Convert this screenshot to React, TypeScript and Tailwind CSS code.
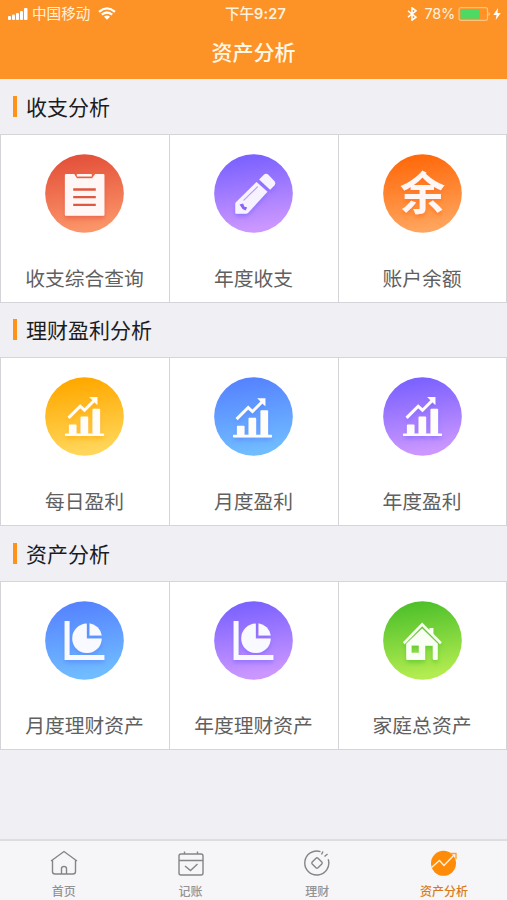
import type { ReactNode } from 'react';

type Tile = { label: string; from: string; to: string; icon: ReactNode };
type Section = { title: string; tiles: Tile[] };

const ink = '#fff7f5';

const Clipboard = () => (
  <g fill={ink}>
    <path d="M63 60H88L96 73H142L151 60H176Q179 60 179 63V183Q179 186 176 186H63Q60 186 60 183V63Q60 60 63 60Z" />
    <rect x="96" y="60" width="45" height="8" rx="2" />
    <path d="M85 107H153M85 130H153M85 153.500H153" stroke="#e0583f" strokeWidth="7" />
  </g>
);

const Pencil = () => (
  <g fill="#f7f2ff">
    <path d="M128 84L161 114L103 177Q100 180 96 180H67Q64 180 64 177V150Q64 147 66 145Z" />
    <path d="M151 62Q157 57 163 62L183 83Q187 89 182 95L169 108L136 77Z" />
    <path d="M90 139L131 99" stroke="#b79bfc" strokeWidth="3.500" strokeLinecap="round" />
    <path d="M77 152L88 149L91 158L100 161L95 170L86 166Z" fill="#8d62f6" />
  </g>
);

const Balance = () => (
  <text x="119" y="168" fill={ink} fontSize="136" fontWeight="700" textAnchor="middle" className="font-['Noto_Sans_CJK_SC',sans-serif]">
    余
  </text>
);

const Growth = () => (
  <g fill="#fffdfa">
    <rect x="60" y="170" width="118" height="8" rx="3" />
    <rect x="72" y="143" width="23" height="29" rx="3" />
    <rect x="107" y="119" width="23" height="53" rx="3" />
    <rect x="143" y="96" width="23" height="76" rx="3" />
    <path d="M71 123L106 88L119 100L149 70" fill="none" stroke="#fffdfa" strokeWidth="9" />
    <path d="M133 60H158V84L151 78L140 67Z" />
  </g>
);

const Pie = () => (
  <g fill="#f8faff">
    <path d="M59 60H74V163H179V178H59Z" />
    <path d="M126 68A44.500 44.500 0 1 0 171 113H126Z" />
    <path d="M134 67A44 44 0 0 1 171 104H134Z" />
  </g>
);

const House = () => (
  <g fill="#fafff5">
    <path d="M60 124L118 65L140 87V81H152V99L177 124L172 130L118 76L65 130Z" />
    <path fillRule="evenodd" d="M118 83L165 129V174Q165 178 161 178H154Q150 178 150 174V135H127V178H74Q70 178 70 174V129ZM86 134V156H108V134Z" />
  </g>
);

const sections: Section[] = [
  {
    title: '收支分析',
    tiles: [
      { label: '收支综合查询', from: '#e4523b', to: '#fb9468', icon: <Clipboard /> },
      { label: '年度收支', from: '#7c62ff', to: '#cb97ff', icon: <Pencil /> },
      { label: '账户余额', from: '#ff6a0c', to: '#ffa45c', icon: <Balance /> },
    ],
  },
  {
    title: '理财盈利分析',
    tiles: [
      { label: '每日盈利', from: '#ffa900', to: '#ffd65a', icon: <Growth /> },
      { label: '月度盈利', from: '#5684ff', to: '#70bcff', icon: <g transform="translate(-3 4)"><Growth /></g> },
      { label: '年度盈利', from: '#7c62ff', to: '#cb97ff', icon: <Growth /> },
    ],
  },
  {
    title: '资产分析',
    tiles: [
      { label: '月度理财资产', from: '#5684ff', to: '#70bcff', icon: <Pie /> },
      { label: '年度理财资产', from: '#7c62ff', to: '#cb97ff', icon: <Pie /> },
      { label: '家庭总资产', from: '#50c12b', to: '#b2ec50', icon: <House /> },
    ],
  },
];

function TileCard({ tile, id }: { tile: Tile; id: string }) {
  return (
    <div className="flex flex-col items-center border-r border-[#d5d5d9] pt-[18.5px] pr-px">
      <svg viewBox="0 0 238 238" className="size-[79px] shrink-0">
        <defs>
          <linearGradient id={id} x1="0" y1="0" x2="0.15" y2="1">
            <stop offset="0.1" stopColor={tile.from} />
            <stop offset="1" stopColor={tile.to} />
          </linearGradient>
          <filter id={`${id}-shadow`} x="-20%" y="-20%" width="140%" height="150%">
            <feDropShadow dx="0" dy="8" stdDeviation="6" floodColor={tile.from} floodOpacity="0.6" />
          </filter>
        </defs>
        <circle cx="119" cy="119" r="118.500" fill={`url(#${id})`} />
        <g filter={`url(#${id}-shadow)`}>{tile.icon}</g>
      </svg>
      <span className="mt-[30px] text-[19.8px] leading-[30px] whitespace-nowrap text-[#606060]">{tile.label}</span>
    </div>
  );
}

function StatusBar() {
  return (
    <div className="grid h-[27px] grid-cols-3 items-center text-[14.6px] leading-none text-[#fff3e0]">
      <div className="flex items-center pl-2">
        <svg viewBox="0 0 20 12" className="h-3 w-5" fill="#fff">
          <rect x="0" y="8" width="3" height="4" rx="1" />
          <rect x="4" y="6.500" width="3" height="5.500" rx="1" />
          <rect x="8" y="5" width="3" height="7" rx="1" />
          <rect x="12" y="3" width="3" height="9" rx="1" />
          <rect x="16" y="0" width="3.500" height="12" rx="1" />
        </svg>
        <span className="ml-1 whitespace-nowrap">中国移动</span>
        <svg viewBox="0 0 18 13" className="ml-2 h-[13px] w-[18px]" fill="none" stroke="#fff" strokeWidth="2.300">
          <path d="M1 4.800Q9 -2 17 4.800M3.800 7.700Q9 3.300 14.200 7.700" />
          <path d="M6 9.800Q9 7.300 12 9.800L9 12.800Z" fill="#fff" stroke="none" />
        </svg>
      </div>
      <div className="flex items-center justify-center pt-px pl-1 text-[14.5px] font-medium whitespace-nowrap">
        <span className="pb-px">下午</span>
        <span className="font-['Inter','Noto_Sans_CJK_SC',sans-serif] text-[14.5px] font-semibold tracking-[0.2px]">9:27</span>
      </div>
      <div className="flex items-center justify-end pr-[6px]">
        <svg viewBox="0 0 10 14" className="mr-[7px] h-[14px] w-[10px]" fill="none" stroke="#fff" strokeWidth="1.500">
          <path d="M1 3.800L9 10.200L5 13.200V0.800L9 3.800L1 10.200" />
        </svg>
        <span className="pt-px font-['Inter',sans-serif] text-[14.5px] tracking-[-0.2px]">78%</span>
        <svg viewBox="0 0 33 14" className="ml-[3px] h-[14px] w-[33px]">
          <rect x="1" y="0.700" width="28.500" height="12.600" rx="2" fill="none" stroke="#ffc17c" strokeWidth="1.200" />
          <rect x="2.500" y="2.300" width="19.500" height="9.400" fill="#4cd964" />
          <path d="M30.500 5V9Q32 8.500 32 7T30.500 5Z" fill="#ffc17c" />
        </svg>
        <svg viewBox="0 0 8 12" className="ml-[2px] h-3 w-2" fill="#fff">
          <path d="M5 0L0.300 7H3.500L2.700 12L7.800 5H4.500Z" />
        </svg>
      </div>
    </div>
  );
}

const tabs = [
  {
    label: '首页',
    icon: (
      <path d="M1 11L14 1.500L27 11M2.500 10V21.500Q2.500 24 5 24H23Q25.500 24 25.500 21.500V10M11.500 24V18.500Q11.500 16.500 14 16.500T16.500 18.500V24" />
    ),
  },
  {
    label: '记账',
    icon: (
      <>
        <rect x="2" y="4" width="24" height="21" rx="2" />
        <path d="M2 10.500H26M7.500 1.500V4M20.500 1.500V4M8 16L13.500 20.500L20.500 14" />
      </>
    ),
  },
  {
    label: '理财',
    icon: (
      <>
        <path d="M17.500 1.600A12 12 0 1 0 25.200 9.300M18.500 4.500L20 1.500M21.500 6.500L24.500 4" />
        <path d="M13 8.200Q14 7.300 15 8.200L18.800 12Q19.700 13 18.800 14L15 17.800Q14 18.700 13 17.800L9.200 14Q8.300 13 9.200 12Z" />
      </>
    ),
  },
  {
    label: '资产分析',
    icon: (
      <>
        <circle cx="13.500" cy="13.300" r="12.500" fill="#ff8c08" stroke="none" />
        <path d="M1.500 17.500L9.500 10.500L14 15.500L24 5" stroke="#fff1d8" />
        <path d="M20.500 3.500H26V9" stroke="#ff9f35" />
      </>
    ),
  },
];

export default function App() {
  return (
    <div className="flex h-[900px] w-[507px] flex-col overflow-hidden bg-[#efeff4] font-['Noto_Sans_CJK_SC',sans-serif]">
      <header className="h-[79px] shrink-0 bg-[#fd9226]">
        <StatusBar />
        <h1 className="text-center text-[21px] leading-[48px] font-medium text-[#fff8e9]">资产分析</h1>
      </header>
      <main className="flex-1">
        {sections.map((section, s) => (
          <section key={section.title} className={s === 1 ? '-mt-px' : ''}>
            <div className="flex h-[55px] items-center pl-[13px]">
              <span className="h-[21px] w-1 bg-[#ff9218]" />
              <h2 className="ml-[9px] pb-0.5 text-[21px] leading-[30px] text-[#1c1c1e]">{section.title}</h2>
            </div>
            <div className="grid h-[169px] grid-cols-[169px_169px_168px] border-y border-l border-[#d5d5d9] bg-white">
              {section.tiles.map((tile, i) => (
                <TileCard key={tile.label} tile={tile} id={`tile-${s}-${i}`} />
              ))}
            </div>
          </section>
        ))}
      </main>
      <nav className="grid h-[61px] shrink-0 grid-cols-4 border-t-2 border-[#dddde1] bg-[#f6f6f8]">
        {tabs.map((tab, i) => (
          <div key={tab.label} className="flex flex-col items-center pt-[9px] pl-px">
            <svg viewBox="0 0 28 27" className="h-[27px] w-7 shrink-0" fill="none" stroke="#858587" strokeWidth="1.400">
              {tab.icon}
            </svg>
            <span
              className={`mt-[6px] text-[12px] leading-4 font-medium whitespace-nowrap ${i === 3 ? 'text-[#d97b1c]' : 'text-[#939395]'}`}
            >
              {tab.label}
            </span>
          </div>
        ))}
      </nav>
    </div>
  );
}
